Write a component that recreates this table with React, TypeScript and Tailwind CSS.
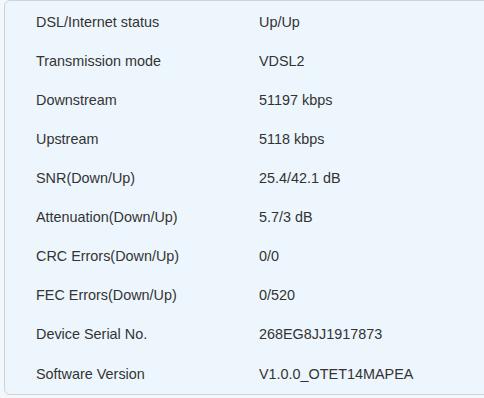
const rows: [string, string][] = [
  ["DSL/Internet status", "Up/Up"],
  ["Transmission mode", "VDSL2"],
  ["Downstream", "51197 kbps"],
  ["Upstream", "5118 kbps"],
  ["SNR(Down/Up)", "25.4/42.1 dB"],
  ["Attenuation(Down/Up)", "5.7/3 dB"],
  ["CRC Errors(Down/Up)", "0/0"],
  ["FEC Errors(Down/Up)", "0/520"],
  ["Device Serial No.", "268EG8JJ1917873"],
  ["Software Version", "V1.0.0_OTET14MAPEA"],
];

export default function App() {
  return (
    <div className="h-[398px] w-[484px] overflow-hidden bg-[#f3f8fc] pl-1 font-['Liberation_Sans',Arial,sans-serif] text-[14.4px] text-[#333]">
      <div className="w-[520px] rounded-md border border-[#cfd3d7] bg-[#eef6fd] pt-[2px]">
        {rows.map(([label, value]) => (
          <div key={label} className="flex h-[39.1px] items-center pl-[31px]">
            <span className="w-[223px]">{label}</span>
            <span>{value}</span>
          </div>
        ))}
      </div>
    </div>
  );
}
